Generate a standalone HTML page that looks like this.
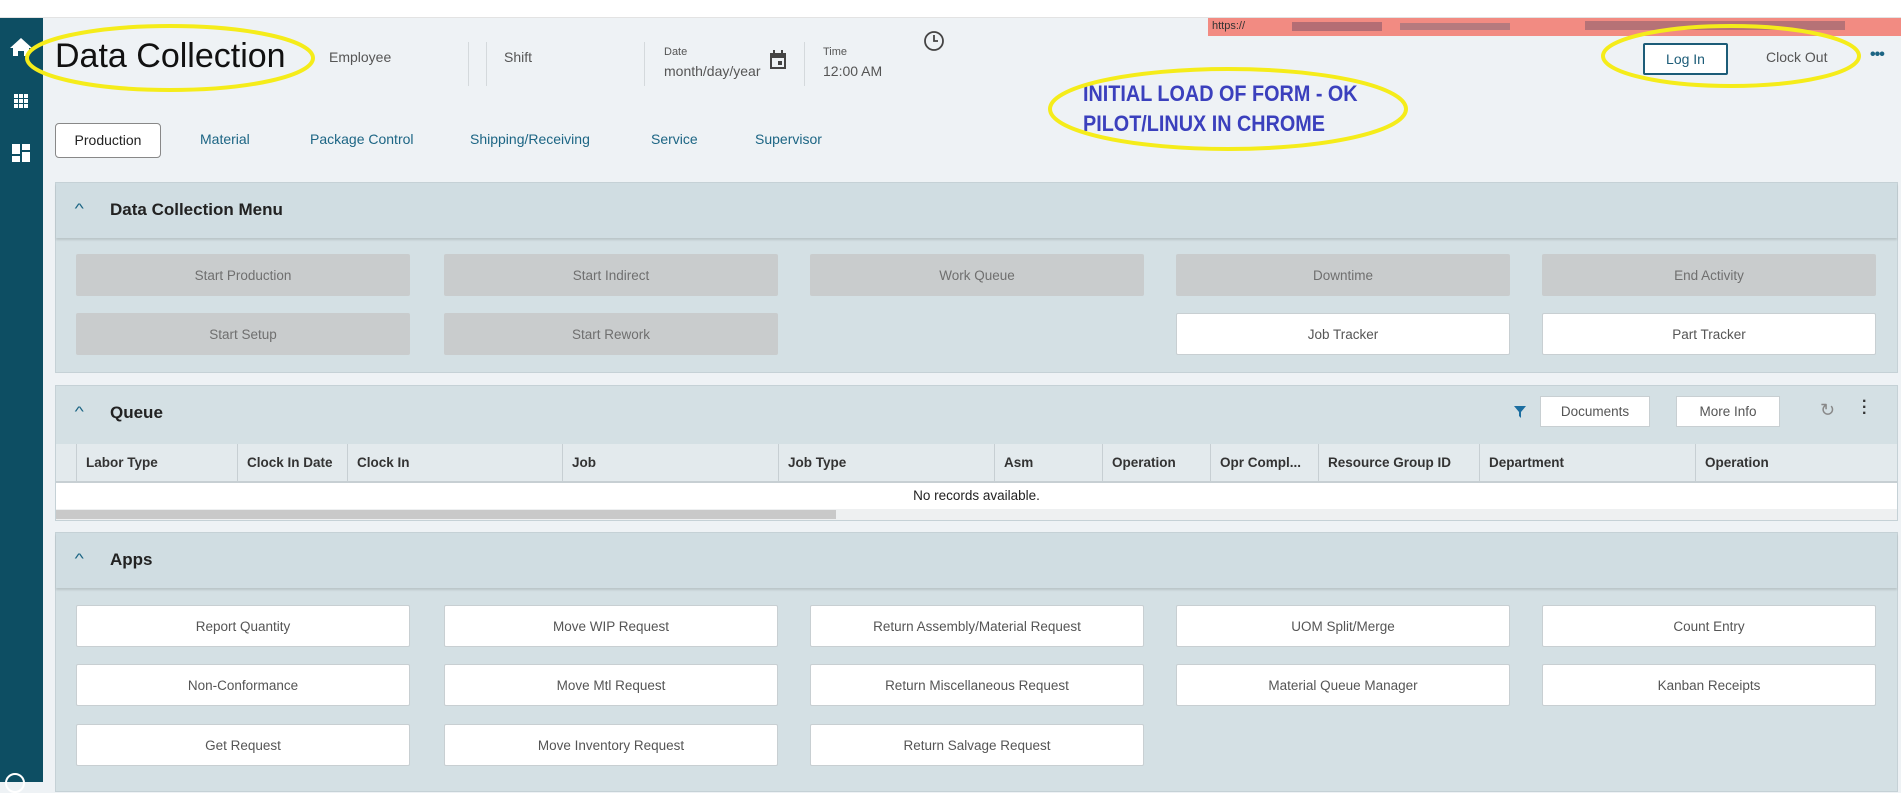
<!DOCTYPE html>
<html><head><meta charset="utf-8"><style>
*{box-sizing:border-box;margin:0;padding:0}
body{width:1901px;height:782px;overflow:hidden;background:#eef2f5;font-family:"Liberation Sans",sans-serif;position:relative;color:#333}
.a{position:absolute}
.sb{left:0;top:18px;width:43px;height:764px;background:#0d4e63}
.sep{width:1px;background:#d4d9dc;top:42px;height:44px}
.lbl{font-size:14px;color:#555}
.tab{font-size:14px;color:#1c6584;top:131px}
.panel{left:55px;width:1843px;background:#d4e0e4;border:1px solid #c5d1d6}
.ph{left:0;top:0;width:100%;background:#d0dde2;box-shadow:0 2px 2px rgba(0,0,0,.12)}
.ph b{position:absolute;left:54px;font-size:17px;color:#222}
.ph i{position:absolute;left:20px;font-style:normal;color:#1c6584;font-size:14px;transform:scaleX(1.4)}
.btn{position:absolute;width:334px;height:42px;display:flex;align-items:center;justify-content:center;font-size:13.5px;color:#555;border-radius:2px}
.dis{background:#c9cccd;color:#6f6f6f}
.wh{background:#fff;border:1px solid #c8cfd2;color:#555}
.th{position:absolute;top:0;height:38px;line-height:38px;font-size:13.5px;font-weight:bold;color:#333;border-left:1px solid #c7cfd3;padding-left:9px;white-space:nowrap}
</style></head><body>
<div class="a" style="left:0;top:0;width:1901px;height:18px;background:#fff;border-bottom:1px solid #e3e3e3"></div>
<div class="a sb"></div>
<svg class="a" style="left:6px;top:36px" width="30" height="140" viewBox="0 0 30 140">
<path d="M15 2 L4 12 H7 V20 H12 V15 H18 V20 H23 V12 H26Z" fill="#fff"/>
<g fill="#fff"><rect x="8" y="58" width="4" height="4"/><rect x="13" y="58" width="4" height="4"/><rect x="18" y="58" width="4" height="4"/><rect x="8" y="63" width="4" height="4"/><rect x="13" y="63" width="4" height="4"/><rect x="18" y="63" width="4" height="4"/><rect x="8" y="68" width="4" height="4"/><rect x="13" y="68" width="4" height="4"/><rect x="18" y="68" width="4" height="4"/>
<rect x="6" y="108" width="8" height="10"/><rect x="16" y="108" width="8" height="6"/><rect x="6" y="120" width="8" height="6"/><rect x="16" y="116" width="8" height="10"/></g>
</svg>
<div class="a" style="left:5px;top:773px;width:20px;height:20px;border:2px solid #fff;border-radius:50%"></div>

<div class="a" style="left:55px;top:37px;font-size:34px;color:#111">Data Collection</div>
<div class="a lbl" style="left:329px;top:49px">Employee</div>
<div class="a sep" style="left:468px"></div><div class="a sep" style="left:486px"></div>
<div class="a lbl" style="left:504px;top:49px">Shift</div>
<div class="a sep" style="left:644px"></div>
<div class="a" style="left:664px;top:46px;font-size:11px;color:#555">Date</div>
<div class="a" style="left:664px;top:63px;font-size:14px;color:#555">month/day/year</div>
<svg class="a" style="left:769px;top:50px" width="18" height="20" viewBox="0 0 18 20"><rect x="1" y="3" width="16" height="16" fill="#444"/><rect x="3" y="8" width="12" height="9" fill="#eef2f5"/><rect x="9" y="11" width="4" height="4" fill="#444"/><rect x="4" y="0" width="2" height="4" fill="#444"/><rect x="12" y="0" width="2" height="4" fill="#444"/></svg>
<div class="a sep" style="left:804px"></div>
<div class="a" style="left:823px;top:46px;font-size:11px;color:#555">Time</div>
<div class="a" style="left:823px;top:63px;font-size:14px;color:#555">12:00 AM</div>
<svg class="a" style="left:923px;top:30px" width="22" height="22" viewBox="0 0 22 22"><circle cx="11" cy="11" r="9" fill="none" stroke="#444" stroke-width="1.8"/><path d="M11 5V11H15" fill="none" stroke="#444" stroke-width="1.8"/></svg>

<div class="a" style="left:1208px;top:18px;width:693px;height:18px;background:#f28b82"></div>
<div class="a" style="left:1212px;top:20px;font-size:11px;color:#333">https://</div>
<div class="a" style="left:1292px;top:22px;width:90px;height:9px;background:#8a5a6a;opacity:.6"></div>
<div class="a" style="left:1400px;top:23px;width:110px;height:7px;background:#7a6a7a;opacity:.5"></div>
<div class="a" style="left:1585px;top:21px;width:260px;height:9px;background:#7a5a6a;opacity:.5"></div>

<div class="a" style="left:1643px;top:43px;width:85px;height:32px;border:2px solid #1c5c78;border-radius:2px;background:#fff;font-size:14px;color:#1c5c78;text-align:center;line-height:28px">Log In</div>
<div class="a" style="left:1766px;top:49px;font-size:14px;color:#555">Clock Out</div>
<div class="a" style="left:1870px;top:46px;font-size:16px;color:#1c6584;font-weight:bold;letter-spacing:-1px">•••</div>

<div class="a" style="left:1083px;top:79px;font-size:22px;font-weight:bold;color:#3b40bd;line-height:30px;transform:scaleX(.9);transform-origin:left;white-space:nowrap">INITIAL LOAD OF FORM - OK<br>PILOT/LINUX IN CHROME</div>

<div class="a" style="left:55px;top:123px;width:106px;height:35px;border:1px solid #888;border-radius:4px;background:#fff;font-size:14px;color:#222;text-align:center;line-height:33px">Production</div>
<div class="a tab" style="left:200px">Material</div>
<div class="a tab" style="left:310px">Package Control</div>
<div class="a tab" style="left:470px">Shipping/Receiving</div>
<div class="a tab" style="left:651px">Service</div>
<div class="a tab" style="left:755px">Supervisor</div>

<div class="a panel" style="top:182px;height:191px">
 <div class="a ph" style="height:55px"><i style="top:17px">^</i><b style="top:17px">Data Collection Menu</b></div>
 <div class="btn dis" style="left:20px;top:71px">Start Production</div>
 <div class="btn dis" style="left:388px;top:71px">Start Indirect</div>
 <div class="btn dis" style="left:754px;top:71px">Work Queue</div>
 <div class="btn dis" style="left:1120px;top:71px">Downtime</div>
 <div class="btn dis" style="left:1486px;top:71px">End Activity</div>
 <div class="btn dis" style="left:20px;top:130px">Start Setup</div>
 <div class="btn dis" style="left:388px;top:130px">Start Rework</div>
 <div class="btn wh" style="left:1120px;top:130px">Job Tracker</div>
 <div class="btn wh" style="left:1486px;top:130px">Part Tracker</div>
</div>

<div class="a panel" style="top:385px;height:136px">
 <div class="a" style="left:20px;top:17px;color:#1c6584;font-size:14px;transform:scaleX(1.4)">^</div>
 <b class="a" style="left:54px;top:17px;font-size:17px;color:#222">Queue</b>
 <svg class="a" style="left:1458px;top:20px" width="12" height="12" viewBox="0 0 12 12"><path d="M0 0H12L7 6V12L5 10V6Z" fill="#1c6ea0"/></svg>
 <div class="a" style="left:1484px;top:10px;width:110px;height:31px;background:#fff;border:1px solid #c8cfd2;font-size:13.5px;color:#555;text-align:center;line-height:29px">Documents</div>
 <div class="a" style="left:1620px;top:10px;width:104px;height:31px;background:#fff;border:1px solid #c8cfd2;font-size:13.5px;color:#555;text-align:center;line-height:29px">More Info</div>
 <div class="a" style="left:1764px;top:14px;font-size:18px;color:#888">&#8635;</div>
 <div class="a" style="left:1806px;top:13px;font-size:16px;font-weight:bold;color:#333;line-height:6px">·<br>·<br>·</div>
 <div class="a" style="left:0;top:58px;width:1841px;height:39px;background:#e3eaed;border-bottom:2px solid #c7cfd3">
  <div class="th" style="left:20px;width:161px">Labor Type</div>
  <div class="th" style="left:181px;width:110px">Clock In Date</div>
  <div class="th" style="left:291px;width:215px">Clock In</div>
  <div class="th" style="left:506px;width:216px">Job</div>
  <div class="th" style="left:722px;width:216px">Job Type</div>
  <div class="th" style="left:938px;width:108px">Asm</div>
  <div class="th" style="left:1046px;width:108px">Operation</div>
  <div class="th" style="left:1154px;width:108px">Opr Compl...</div>
  <div class="th" style="left:1262px;width:161px">Resource Group ID</div>
  <div class="th" style="left:1423px;width:216px">Department</div>
  <div class="th" style="left:1639px;width:202px">Operation</div>
 </div>
 <div class="a" style="left:0;top:97px;width:1841px;height:26px;background:#fff;font-size:13.5px;color:#222;text-align:center;line-height:26px">No records available.</div>
 <div class="a" style="left:0;top:123px;width:1841px;height:11px;background:#eef0f1"></div>
 <div class="a" style="left:0;top:124px;width:780px;height:9px;background:#c9c9c9"></div>
</div>

<div class="a panel" style="top:532px;height:260px">
 <div class="a ph" style="height:55px"><i style="top:17px">^</i><b style="top:17px">Apps</b></div>
 <div class="btn wh" style="left:20px;top:72px">Report Quantity</div>
 <div class="btn wh" style="left:388px;top:72px">Move WIP Request</div>
 <div class="btn wh" style="left:754px;top:72px">Return Assembly/Material Request</div>
 <div class="btn wh" style="left:1120px;top:72px">UOM Split/Merge</div>
 <div class="btn wh" style="left:1486px;top:72px">Count Entry</div>
 <div class="btn wh" style="left:20px;top:131px">Non-Conformance</div>
 <div class="btn wh" style="left:388px;top:131px">Move Mtl Request</div>
 <div class="btn wh" style="left:754px;top:131px">Return Miscellaneous Request</div>
 <div class="btn wh" style="left:1120px;top:131px">Material Queue Manager</div>
 <div class="btn wh" style="left:1486px;top:131px">Kanban Receipts</div>
 <div class="btn wh" style="left:20px;top:191px">Get Request</div>
 <div class="btn wh" style="left:388px;top:191px">Move Inventory Request</div>
 <div class="btn wh" style="left:754px;top:191px">Return Salvage Request</div>
</div>

<svg class="a" style="left:0;top:0" width="1901" height="782" viewBox="0 0 1901 782">
<g fill="none" stroke="#f5ec1a" stroke-width="4">
<ellipse cx="170" cy="58" rx="143" ry="32"/>
<ellipse cx="1731" cy="56" rx="128" ry="30"/>
<ellipse cx="1228" cy="109" rx="178" ry="40"/>
</g></svg>
</body></html>
